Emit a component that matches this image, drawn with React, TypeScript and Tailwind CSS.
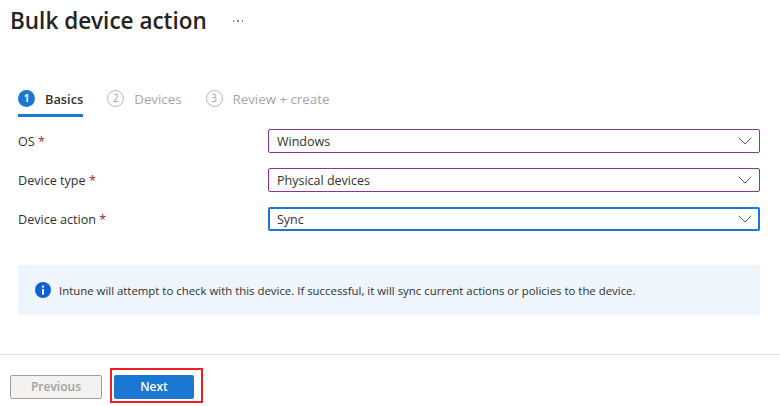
const fields = [
  { label: 'OS', value: 'Windows', focused: false },
  { label: 'Device type', value: 'Physical devices', focused: false },
  { label: 'Device action', value: 'Sync', focused: true },
]

function Step({ n, label, active }: { n: number; label: string; active?: boolean }) {
  return (
    <div className={active ? 'flex h-[33px] items-center gap-[10px] border-b-[3px] border-[#1a77d2] pb-[1px]' : 'flex h-[33px] items-center gap-[10px] pb-[4px]'}>
      <div
        className={
          active
            ? 'flex size-[17px] items-center justify-center rounded-full bg-[#1a77d2] text-[10px] font-bold text-white'
            : 'flex size-[17px] items-center justify-center rounded-full border border-[#b5b5b5] text-[10px] text-[#a0a0a0]'
        }
      >
        {n}
      </div>
      <span className={active ? 'pt-[3px] text-[12.8px] font-semibold text-[#323130]' : 'pt-[3px] text-[13.3px] text-[#a6a6a6]'}>{label}</span>
    </div>
  )
}

export default function App() {
  return (
    <div className="flex h-[406px] w-[780px] flex-col overflow-hidden bg-white font-['Open_Sans','Noto_Sans',sans-serif] text-[#323130]">
      <div className="flex h-[84px] shrink-0 items-start pl-[10px] pt-[4px]">
        <h1 className="text-[22.5px] font-semibold leading-[34px] text-[#252423]">Bulk device action</h1>
        <div className="ml-[26px] mt-[16px] flex gap-[3px]">
          <span className="size-[1.5px] rounded-full bg-[#605e5c]" />
          <span className="size-[1.5px] rounded-full bg-[#605e5c]" />
          <span className="size-[1.5px] rounded-full bg-[#605e5c]" />
        </div>
      </div>

      <div className="flex shrink-0 gap-[24px] pl-[18px]">
        <Step n={1} label="Basics" active />
        <Step n={2} label="Devices" />
        <Step n={3} label="Review + create" />
      </div>

      <div className="mt-[12px] flex shrink-0 flex-col gap-[15px] pl-[18px] pr-[20px]">
        {fields.map((f) => (
          <div key={f.label} className="flex items-center">
            <div className="w-[250px] pt-[2px] text-[12.6px] text-[#323130]">
              {f.label} <span className="text-[#a4262c]">*</span>
            </div>
            <div
              className={
                f.focused
                  ? 'flex h-[24px] flex-1 items-center justify-between rounded-[2px] border-2 border-[#1a77d2] pl-[7px] pr-[6px]'
                  : 'flex h-[24px] flex-1 items-center justify-between rounded-[2px] border border-[#8a329e] pl-[8px] pr-[7px]'
              }
            >
              <span className="pt-[2px] text-[12.5px] text-[#323130]">{f.value}</span>
              <svg viewBox="0 0 14 8" className="h-[8px] w-[14px] text-[#605e5c]" fill="none" stroke="currentColor" strokeWidth="1">
                <path d="M0.7 0.7 L7 7 L13.3 0.7" />
              </svg>
            </div>
          </div>
        ))}
      </div>

      <div className="ml-[18px] mr-[20px] mt-[34px] flex h-[50px] shrink-0 items-center gap-[8px] rounded-[2px] bg-[#eef5fd] pl-[17px]">
        <svg viewBox="0 0 16 16" className="size-[16px] shrink-0">
          <circle cx="8" cy="8" r="8" fill="#0f62d6" />
          <rect x="7" y="7" width="2" height="5.5" fill="#fff" />
          <circle cx="8" cy="4.7" r="1.15" fill="#fff" />
        </svg>
        <span className="pt-[2px] text-[11.4px] text-[#323130]">
          Intune will attempt to check with this device. If successful, it will sync current actions or policies to the device.
        </span>
      </div>

      <div className="mt-[39px] h-[1px] shrink-0 bg-[#e1e1e1]" />

      <div className="flex items-start pl-[10px] pt-[13px]">
        <button className="mt-[7px] h-[24px] w-[92px] rounded-[2px] border border-[#a19f9d] bg-[#f3f2f1] text-[12px] font-semibold text-[#a19f9d]">
          Previous
        </button>
        <div className="ml-[8px] border-2 border-[#ee1c25] pb-[2px] pl-[2px] pr-[7px] pt-[5px]">
          <button className="block h-[24px] w-[80px] rounded-[2px] bg-[#1a77d2] text-[12px] font-semibold text-white">
            Next
          </button>
        </div>
      </div>
    </div>
  )
}
